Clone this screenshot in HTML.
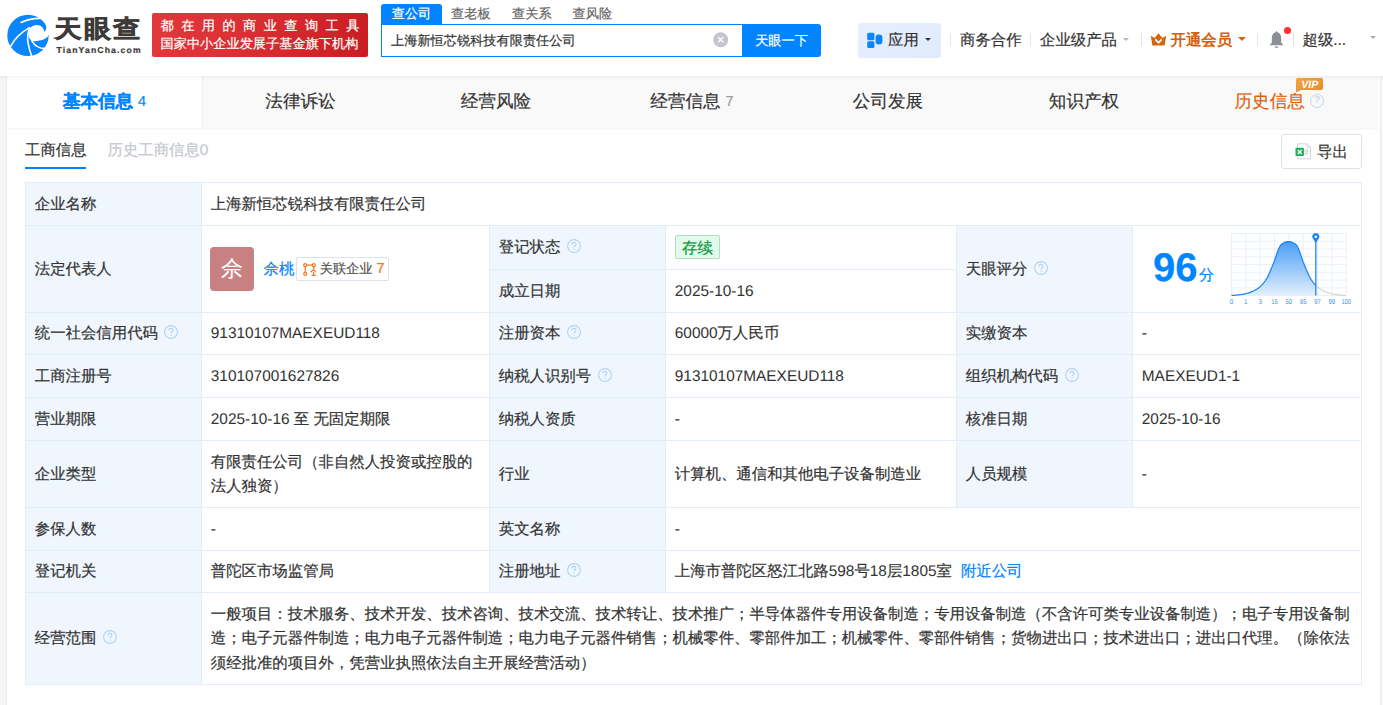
<!DOCTYPE html>
<html><head><meta charset="utf-8">
<style>
*{margin:0;padding:0;box-sizing:border-box}
html,body{width:1383px;height:705px;overflow:hidden;background:#f5f5f5;font-family:"Liberation Sans",sans-serif;color:#333;font-size:15.4px;text-spacing-trim:space-all;text-rendering:geometricPrecision;-webkit-text-stroke:0.2px currentColor}
.a{position:absolute;white-space:nowrap}
#hdr{position:absolute;left:0;top:0;width:1383px;height:76px;background:#fff;box-shadow:0 1px 4px rgba(0,0,0,.07);z-index:5}
#card{position:absolute;left:6px;top:76px;width:1375px;height:640px;background:#fff;border-left:1px solid #ececec;border-right:1px solid #ececec}
.tabs{position:absolute;left:7px;top:76px;width:1371px;height:53px;background:#f9f9f9;border-bottom:1px solid #f5f5f5;box-shadow:0 1px 0 #fbfbfb}
.tab{position:absolute;top:0;height:52px;line-height:50px;text-align:center;font-size:17.6px;color:#333;white-space:nowrap}
.cell{position:absolute;display:flex;align-items:center;padding-top:2px;padding-left:8.8px;padding-right:9px;line-height:24.2px}
.l{-webkit-text-stroke:0}
.hl{position:absolute;height:1px;background:#e3edf7}
.vl{position:absolute;width:1px;background:#e3edf7}
.q{display:block;width:14px;height:14px;margin-left:6.5px;margin-top:-5px;flex:none}
.blue{color:#0084ff}
.av{width:44px;height:44px;border-radius:4px;background:#c88080;color:#fff;font-size:22px;line-height:44px;text-align:center;flex:none}
.rel{display:inline-flex;align-items:center;height:24px;border:1px solid #dde3ec;border-radius:2px;padding:0 3px 0 6px;margin-left:1.5px;font-size:13.2px;color:#555}
.tag{display:inline-block;height:24px;line-height:25px;overflow:hidden;border:1px solid #a9e0c0;background:#e3f9ec;color:#0b9a3c;border-radius:2px;padding:0 6.3px}
</style></head><body>
<div id="hdr">
<svg class="a" style="left:4px;top:10px" width="50" height="50" viewBox="0 0 705 705">
<circle cx="338" cy="358" r="292" fill="#0a85fd"/>
<path d="M492,104 C560,140 602,200 596,254 C592,280 582,298 570,308 C567,292 560,275 548,255 C530,228 500,214 462,212 C440,210 410,222 375,245 C352,280 344,320 346,360 C350,395 365,420 395,432 C430,445 480,440 522,428 C590,410 620,380 640,335 L710,335 L710,-5 L492,-5 Z" fill="#fff"/>
<g fill="none" stroke="#fff" stroke-width="22" stroke-linecap="round">
<path d="M360,248 C250,310 150,400 95,510"/>
<path d="M362,252 C335,310 322,380 342,479 C352,540 370,600 395,665"/>
<path d="M390,432 C430,500 500,545 580,545"/>
<path d="M240,175 C320,140 420,115 510,118"/>
</g></svg>
<div class="a" style="left:54.5px;top:13px;font-size:27px;line-height:36px;font-weight:bold;color:#3d3a39;-webkit-text-stroke:0.7px #3d3a39;letter-spacing:2.4px;transform:scaleY(0.9);transform-origin:0 0">天眼查</div>
<div class="a" style="left:56.5px;top:44px;font-size:8.6px;line-height:12px;font-weight:bold;color:#3d3a39;letter-spacing:1.15px">TianYanCha.com</div>
<div class="a" style="left:152px;top:13px;width:216px;height:44px;border-radius:2px;background:linear-gradient(100deg,#e2393d 0%,#d72a2f 60%,#c81d22 100%)"></div>
<div class="a" style="left:160.5px;top:16.5px;font-size:13.2px;line-height:17px;color:#fff;letter-spacing:7.45px">都在用的商业查询工具</div>
<div class="a" style="left:160.5px;top:35px;font-size:13.2px;line-height:17px;color:#fff">国家中小企业发展子基金旗下机构</div>
<div class="a" style="left:381px;top:4px;width:61px;height:20px;background:#0084ff;border-radius:3px 3px 0 0;color:#fff;font-size:13.2px;line-height:19px;text-align:center">查公司</div>
<div class="a" style="left:451px;top:4px;font-size:13.2px;line-height:19px;color:#666">查老板</div>
<div class="a" style="left:512px;top:4px;font-size:13.2px;line-height:19px;color:#666">查关系</div>
<div class="a" style="left:572.5px;top:4px;font-size:13.2px;line-height:19px;color:#666">查风险</div>
<div class="a" style="left:381px;top:24px;width:362px;height:33px;border:1px solid #0084ff;border-right:none;background:#fff"></div>
<div class="a" style="left:391px;top:31px;font-size:13.2px;line-height:19px;color:#333">上海新恒芯锐科技有限责任公司</div>
<svg class="a" style="left:713px;top:31.5px" width="16" height="16" viewBox="0 0 16 16"><circle cx="7.7" cy="7.7" r="7.5" fill="#c4c6cc"/><path d="M5,5 L10.4,10.4 M10.4,5 L5,10.4" stroke="#fff" stroke-width="1.3"/></svg>
<div class="a" style="left:742px;top:24px;width:79px;height:33px;background:#0084ff;border-radius:0 3px 3px 0;color:#fff;font-size:13.2px;line-height:33px;text-align:center">天眼一下</div>
<div class="a" style="left:858px;top:23px;width:83px;height:35px;border-radius:3px;background:linear-gradient(160deg,#e6f0fd,#dfeafc)"></div>
<svg class="a" style="left:866px;top:32px" width="18" height="17" viewBox="0 0 18 17"><rect x="1.2" y="0.8" width="7.2" height="7.4" rx="1.5" fill="#0a85fd"/><rect x="1.2" y="9.2" width="7.2" height="6.8" rx="1.5" fill="#0a85fd"/><rect x="9.6" y="2.6" width="6.8" height="9.8" rx="3.2" fill="#0a85fd"/></svg>
<div class="a" style="left:888px;top:31px;font-size:15.4px;line-height:20px;color:#333">应用</div>
<div class="a" style="left:925px;top:37.7px;width:0;height:0;border-left:3.25px solid transparent;border-right:3.25px solid transparent;border-top:3.5px solid #333"></div><div class="a" style="left:950px;top:33px;width:1px;height:13px;background:#e3e3e3"></div>
<div class="a" style="left:960px;top:31px;font-size:15.4px;line-height:20px;color:#333">商务合作</div>
<div class="a" style="left:1030px;top:33px;width:1px;height:13px;background:#e3e3e3"></div>
<div class="a" style="left:1040px;top:31px;font-size:15.4px;line-height:20px;color:#333">企业级产品</div>
<div class="a" style="left:1122.5px;top:37.5px;width:0;height:0;border-left:3.5px solid transparent;border-right:3.5px solid transparent;border-top:3.5px solid #b4b4b4"></div><div class="a" style="left:1141px;top:33px;width:1px;height:13px;background:#e3e3e3"></div>
<svg class="a" style="left:1150px;top:33px" width="17" height="13" viewBox="0 0 17 13"><path d="M0.8,2.8 L4.6,5 L8.5,0.2 L12.4,5 L16.2,2.8 L14.6,12.6 L2.4,12.6 Z" fill="#d9620c"/><path d="M5.3,6.4 L8.5,9.8 L11.7,6.4" fill="none" stroke="#fff" stroke-width="1.8"/></svg>
<div class="a" style="left:1170.5px;top:31px;font-size:15.4px;line-height:20px;color:#d6600c;font-weight:bold;-webkit-text-stroke:0">开通会员</div>
<div class="a" style="left:1237.5px;top:37px;width:0;height:0;border-left:4.0px solid transparent;border-right:4.0px solid transparent;border-top:4px solid #d9620c"></div><div class="a" style="left:1257px;top:33px;width:1px;height:13px;background:#e3e3e3"></div>
<svg class="a" style="left:1268px;top:30px" width="17" height="19" viewBox="0 0 17 19"><path d="M8.5,1 C8.9,1 9.1,1.4 9.1,1.9 C12,2.6 13.2,5.3 13.2,8.5 L13.2,12.8 L15.2,14.8 L15.2,15.2 L1.8,15.2 L1.8,14.8 L3.8,12.8 L3.8,8.5 C3.8,5.3 5,2.6 7.9,1.9 C7.9,1.4 8.1,1 8.5,1 Z" fill="#8c8f95"/><rect x="6.6" y="16.5" width="3.8" height="1.2" rx="0.6" fill="#8c8f95"/></svg>
<div class="a" style="left:1284px;top:27px;width:7px;height:7px;border-radius:50%;background:#ff3131"></div>
<div class="a" style="left:1293px;top:33px;width:1px;height:13px;background:#e3e3e3"></div>
<div class="a" style="left:1302.5px;top:31px;font-size:15.4px;line-height:20px;color:#333">超级...</div>
<div class="a" style="left:1369.5px;top:36.3px;width:0;height:0;border-left:3.75px solid transparent;border-right:3.75px solid transparent;border-top:3.8px solid #aaa"></div>
</div>
<div id="card"></div>
<div class="tabs">
  <div class="tab" style="left:0;width:195px;background:#fff;color:#0084ff;font-weight:bold">基本信息 <span style="font-size:14.5px;font-weight:normal;position:relative;top:-1px">4</span></div>
  <div class="tab" style="left:195px;width:196px;border-left:1px solid #efefef">法律诉讼</div>
  <div class="tab" style="left:391px;width:196px">经营风险</div>
  <div class="tab" style="left:587px;width:196px">经营信息 <span style="font-size:14.5px;color:#999;position:relative;top:-1.5px">7</span></div>
  <div class="tab" style="left:783px;width:196px">公司发展</div>
  <div class="tab" style="left:979px;width:196px">知识产权</div>
  <div class="tab" style="left:1227.5px;width:80px;color:#de620c;text-align:left">历史信息</div>
</div>

<div class="a" style="left:25px;top:141px;font-size:15.4px;line-height:20px;color:#333">工商信息</div>
<div class="a" style="left:25px;top:167px;width:61px;height:2px;background:#0084ff"></div>
<div class="a" style="left:107.5px;top:141px;font-size:15.4px;line-height:20px;color:#c4c7ce">历史工商信息0</div>
<div class="a" style="left:1281px;top:134px;width:81px;height:35px;border:1px solid #dde2ea;border-radius:3px;background:#fff"></div>
<svg class="a" style="left:1295px;top:143px" width="17" height="17" viewBox="0 0 17 17"><path d="M2.5,0.8 L12,0.8 L15.5,4.3 L15.5,15.8 L2.5,15.8 Z" fill="#fff" stroke="#d3d6dc" stroke-width="1"/><path d="M12,0.8 L12,4.3 L15.5,4.3" fill="none" stroke="#d3d6dc" stroke-width="1"/><rect x="9.5" y="6.4" width="3.5" height="1" fill="#c6c9cf"/><rect x="9.5" y="8.4" width="3.5" height="1" fill="#c6c9cf"/><rect x="9.5" y="10.4" width="3.5" height="1" fill="#c6c9cf"/><rect x="0.5" y="4.8" width="8.4" height="8.2" rx="0.8" fill="#1fae5c"/><path d="M2.7,7 L6.7,11 M6.7,7 L2.7,11" stroke="#fff" stroke-width="1.3"/></svg>
<div class="a" style="left:1317px;top:142.5px;font-size:15.4px;line-height:20px;color:#333">导出</div>
<div class="a" style="left:1310px;top:94px;width:14px;height:14px;border:1px solid #c3d6e8;border-radius:50%;color:#c3d6e8;font-size:10px;line-height:12px;text-align:center;z-index:3">?</div>
<svg class="a" style="left:1295px;top:77px;z-index:3" width="29" height="16" viewBox="0 0 29 16"><defs><linearGradient id="vg" x1="0" y1="0" x2="1" y2="1"><stop offset="0" stop-color="#f2a548"/><stop offset="1" stop-color="#e78a22"/></linearGradient></defs><path d="M2.5,1 L26,1 Q28,1 28,3 L28,11 Q28,13 26,13 L6,13 L1,15.5 L1,3 Q1,1 2.5,1 Z" fill="url(#vg)"/><text x="14.8" y="11" font-family="Liberation Sans" font-size="10.5" font-weight="bold" font-style="italic" fill="#fff" text-anchor="middle">VIP</text></svg>

<div id="tbl"><div class="cell" style="left:26px;top:183px;width:175px;height:42px;background:#eff6fd;">企业名称</div>
<div class="cell" style="left:202px;top:183px;width:1159px;height:42px;">上海新恒芯锐科技有限责任公司</div>
<div class="cell" style="left:26px;top:226px;width:175px;height:86px;background:#eff6fd;">法定代表人</div>
<div class="cell" style="left:202px;top:226px;width:287px;height:86px;"><div class="av" style="margin-left:-0.8px;margin-top:-2px">佘</div><span class="blue" style="margin-left:9.5px">佘桃</span><span class="rel" style="margin-top:-2px"><svg width="13" height="13" viewBox="0 0 13 13" style="margin-right:4px;flex:none"><g fill="none" stroke="#f5731c" stroke-width="1.2"><circle cx="2.2" cy="2.2" r="1.5"/><circle cx="10.8" cy="2.2" r="1.5"/><circle cx="2.2" cy="10.8" r="1.5"/><path d="M3.7,2.2H9.3M2.2,3.7V9.3M10.8,3.7V6.2M7.6,9.2L10.5,6.6L13,9.2M8.6,12.3H12.6M10.6,9V12.3"/></g></svg>关联企业<span style="color:#f5731c;margin-left:4px;font-size:14.5px">7</span></span></div>
<div class="cell" style="left:490px;top:226px;width:175px;height:43px;background:#eff6fd;">登记状态<svg class="q" viewBox="0 0 14 14"><circle cx="7" cy="7" r="6.4" fill="none" stroke="#b3d3f1" stroke-width="1.1"/><path d="M5,5.4 C5,4.1 5.9,3.4 7,3.4 C8.1,3.4 9,4.1 9,5.2 C9,6.5 7.2,6.6 7.2,8.2" fill="none" stroke="#b3d3f1" stroke-width="1.1"/><circle cx="7.2" cy="10.1" r="0.7" fill="#b3d3f1"/></svg></div>
<div class="cell" style="left:666px;top:226px;width:290px;height:43px;"><span class="tag" style="margin-top:-3px">存续</span></div>
<div class="cell" style="left:490px;top:270px;width:175px;height:42px;background:#eff6fd;">成立日期</div>
<div class="cell" style="left:666px;top:270px;width:290px;height:42px;"><div><span class="l">2025-10-16</span></div></div>
<div class="cell" style="left:957px;top:226px;width:175px;height:86px;background:#eff6fd;">天眼评分<svg class="q" viewBox="0 0 14 14"><circle cx="7" cy="7" r="6.4" fill="none" stroke="#b3d3f1" stroke-width="1.1"/><path d="M5,5.4 C5,4.1 5.9,3.4 7,3.4 C8.1,3.4 9,4.1 9,5.2 C9,6.5 7.2,6.6 7.2,8.2" fill="none" stroke="#b3d3f1" stroke-width="1.1"/><circle cx="7.2" cy="10.1" r="0.7" fill="#b3d3f1"/></svg></div>
<div class="cell" style="left:1133px;top:226px;width:228px;height:86px;"></div>
<svg class="a" style="left:1226px;top:226px" width="130" height="82" viewBox="1226 226 130 82"><defs><linearGradient id="cg" x1="0" y1="0" x2="0" y2="1"><stop offset="0" stop-color="#4a9df6"/><stop offset="1" stop-color="#e3f0fd"/></linearGradient></defs><path d="M1231.50,233.50V295.50M1245.84,233.50V295.50M1260.17,233.50V295.50M1274.51,233.50V295.50M1288.85,233.50V295.50M1303.19,233.50V295.50M1317.53,233.50V295.50M1331.86,233.50V295.50M1346.20,233.50V295.50M1231.50,233.50H1346.20M1231.50,241.25H1346.20M1231.50,249.00H1346.20M1231.50,256.75H1346.20M1231.50,264.50H1346.20M1231.50,272.25H1346.20M1231.50,280.00H1346.20M1231.50,287.75H1346.20M1231.50,295.50H1346.20" stroke="#e8f0f9" stroke-width="1" fill="none"/><path d="M1231.50,295.50 L1231.50,295.46 L1232.00,295.43 L1232.50,295.40 L1233.00,295.37 L1233.50,295.34 L1234.00,295.30 L1234.50,295.26 L1235.00,295.22 L1235.50,295.18 L1236.00,295.13 L1236.50,295.08 L1237.00,295.03 L1237.50,294.98 L1238.00,294.92 L1238.50,294.86 L1239.00,294.80 L1239.50,294.74 L1240.00,294.68 L1240.50,294.62 L1241.00,294.55 L1241.50,294.48 L1242.00,294.41 L1242.50,294.34 L1243.00,294.26 L1243.50,294.17 L1244.00,294.08 L1244.50,293.98 L1245.00,293.88 L1245.50,293.76 L1246.00,293.64 L1246.50,293.51 L1247.00,293.37 L1247.50,293.23 L1248.00,293.09 L1248.50,292.94 L1249.00,292.79 L1249.50,292.63 L1250.00,292.46 L1250.50,292.28 L1251.00,292.09 L1251.50,291.89 L1252.00,291.68 L1252.50,291.46 L1253.00,291.22 L1253.50,290.97 L1254.00,290.71 L1254.50,290.44 L1255.00,290.17 L1255.50,289.88 L1256.00,289.59 L1256.50,289.29 L1257.00,288.97 L1257.50,288.65 L1258.00,288.30 L1258.50,287.95 L1259.00,287.57 L1259.50,287.18 L1260.00,286.77 L1260.50,286.34 L1261.00,285.89 L1261.50,285.36 L1262.00,284.81 L1262.50,284.25 L1263.00,283.66 L1263.50,283.06 L1264.00,282.43 L1264.50,281.77 L1265.00,281.09 L1265.50,280.37 L1266.00,279.61 L1266.50,278.82 L1267.00,277.98 L1267.50,277.09 L1268.00,276.14 L1268.50,275.13 L1269.00,274.06 L1269.50,272.94 L1270.00,271.78 L1270.50,270.58 L1271.00,269.36 L1271.50,268.13 L1272.00,266.89 L1272.50,265.65 L1273.00,264.42 L1273.50,263.22 L1274.00,262.04 L1274.50,260.70 L1275.00,259.25 L1275.50,257.76 L1276.00,256.26 L1276.50,254.76 L1277.00,253.28 L1277.50,251.86 L1278.00,250.52 L1278.50,249.27 L1279.00,248.15 L1279.50,247.17 L1280.00,246.21 L1280.50,245.42 L1281.00,244.80 L1281.50,244.31 L1282.00,243.93 L1282.50,243.63 L1283.00,243.36 L1283.50,243.11 L1284.00,242.84 L1284.50,242.56 L1285.00,242.32 L1285.50,242.11 L1286.00,241.95 L1286.50,241.82 L1287.00,241.72 L1287.50,241.66 L1288.00,241.62 L1288.50,241.60 L1289.00,241.61 L1289.50,241.64 L1290.00,241.69 L1290.50,241.78 L1291.00,241.89 L1291.50,242.04 L1292.00,242.23 L1292.50,242.46 L1293.00,242.73 L1293.50,243.01 L1294.00,243.26 L1294.50,243.52 L1295.00,243.80 L1295.50,244.15 L1296.00,244.59 L1296.50,245.15 L1297.00,245.87 L1297.50,246.78 L1298.00,247.74 L1298.50,248.80 L1299.00,250.01 L1299.50,251.31 L1300.00,252.71 L1300.50,254.16 L1301.00,255.65 L1301.50,257.16 L1302.00,258.66 L1302.50,260.13 L1303.00,261.54 L1303.50,262.74 L1304.00,263.94 L1304.50,265.16 L1305.00,266.39 L1305.50,267.63 L1306.00,268.87 L1306.50,270.10 L1307.00,271.30 L1307.50,272.48 L1308.00,273.62 L1308.50,274.71 L1309.00,275.75 L1309.50,276.72 L1310.00,277.63 L1310.50,278.49 L1311.00,279.30 L1311.50,280.07 L1312.00,280.81 L1312.50,281.50 L1313.00,282.17 L1313.50,282.81 L1314.00,283.42 L1314.50,284.01 L1315.00,284.59 L1315.50,285.14 L1315.80,285.47 L1315.80,295.50 Z" fill="url(#cg)"/><path d="M1231.50,295.46 L1232.00,295.43 L1232.50,295.40 L1233.00,295.37 L1233.50,295.34 L1234.00,295.30 L1234.50,295.26 L1235.00,295.22 L1235.50,295.18 L1236.00,295.13 L1236.50,295.08 L1237.00,295.03 L1237.50,294.98 L1238.00,294.92 L1238.50,294.86 L1239.00,294.80 L1239.50,294.74 L1240.00,294.68 L1240.50,294.62 L1241.00,294.55 L1241.50,294.48 L1242.00,294.41 L1242.50,294.34 L1243.00,294.26 L1243.50,294.17 L1244.00,294.08 L1244.50,293.98 L1245.00,293.88 L1245.50,293.76 L1246.00,293.64 L1246.50,293.51 L1247.00,293.37 L1247.50,293.23 L1248.00,293.09 L1248.50,292.94 L1249.00,292.79 L1249.50,292.63 L1250.00,292.46 L1250.50,292.28 L1251.00,292.09 L1251.50,291.89 L1252.00,291.68 L1252.50,291.46 L1253.00,291.22 L1253.50,290.97 L1254.00,290.71 L1254.50,290.44 L1255.00,290.17 L1255.50,289.88 L1256.00,289.59 L1256.50,289.29 L1257.00,288.97 L1257.50,288.65 L1258.00,288.30 L1258.50,287.95 L1259.00,287.57 L1259.50,287.18 L1260.00,286.77 L1260.50,286.34 L1261.00,285.89 L1261.50,285.36 L1262.00,284.81 L1262.50,284.25 L1263.00,283.66 L1263.50,283.06 L1264.00,282.43 L1264.50,281.77 L1265.00,281.09 L1265.50,280.37 L1266.00,279.61 L1266.50,278.82 L1267.00,277.98 L1267.50,277.09 L1268.00,276.14 L1268.50,275.13 L1269.00,274.06 L1269.50,272.94 L1270.00,271.78 L1270.50,270.58 L1271.00,269.36 L1271.50,268.13 L1272.00,266.89 L1272.50,265.65 L1273.00,264.42 L1273.50,263.22 L1274.00,262.04 L1274.50,260.70 L1275.00,259.25 L1275.50,257.76 L1276.00,256.26 L1276.50,254.76 L1277.00,253.28 L1277.50,251.86 L1278.00,250.52 L1278.50,249.27 L1279.00,248.15 L1279.50,247.17 L1280.00,246.21 L1280.50,245.42 L1281.00,244.80 L1281.50,244.31 L1282.00,243.93 L1282.50,243.63 L1283.00,243.36 L1283.50,243.11 L1284.00,242.84 L1284.50,242.56 L1285.00,242.32 L1285.50,242.11 L1286.00,241.95 L1286.50,241.82 L1287.00,241.72 L1287.50,241.66 L1288.00,241.62 L1288.50,241.60 L1289.00,241.61 L1289.50,241.64 L1290.00,241.69 L1290.50,241.78 L1291.00,241.89 L1291.50,242.04 L1292.00,242.23 L1292.50,242.46 L1293.00,242.73 L1293.50,243.01 L1294.00,243.26 L1294.50,243.52 L1295.00,243.80 L1295.50,244.15 L1296.00,244.59 L1296.50,245.15 L1297.00,245.87 L1297.50,246.78 L1298.00,247.74 L1298.50,248.80 L1299.00,250.01 L1299.50,251.31 L1300.00,252.71 L1300.50,254.16 L1301.00,255.65 L1301.50,257.16 L1302.00,258.66 L1302.50,260.13 L1303.00,261.54 L1303.50,262.74 L1304.00,263.94 L1304.50,265.16 L1305.00,266.39 L1305.50,267.63 L1306.00,268.87 L1306.50,270.10 L1307.00,271.30 L1307.50,272.48 L1308.00,273.62 L1308.50,274.71 L1309.00,275.75 L1309.50,276.72 L1310.00,277.63 L1310.50,278.49 L1311.00,279.30 L1311.50,280.07 L1312.00,280.81 L1312.50,281.50 L1313.00,282.17 L1313.50,282.81 L1314.00,283.42 L1314.50,284.01 L1315.00,284.59 L1315.50,285.14 L1315.80,285.47" fill="none" stroke="#1a85f6" stroke-width="1.25"/><path d="M1315.80,285.47 L1316.30,285.98 L1316.80,286.43 L1317.30,286.86 L1317.80,287.26 L1318.30,287.65 L1318.80,288.02 L1319.30,288.37 L1319.80,288.71 L1320.30,289.04 L1320.80,289.35 L1321.30,289.65 L1321.80,289.94 L1322.30,290.22 L1322.80,290.49 L1323.30,290.76 L1323.80,291.02 L1324.30,291.27 L1324.80,291.50 L1325.30,291.72 L1325.80,291.93 L1326.30,292.13 L1326.80,292.31 L1327.30,292.49 L1327.80,292.66 L1328.30,292.82 L1328.80,292.97 L1329.30,293.12 L1329.80,293.26 L1330.30,293.40 L1330.80,293.53 L1331.30,293.67 L1331.80,293.79 L1332.30,293.90 L1332.80,294.00 L1333.30,294.10 L1333.80,294.19 L1334.30,294.28 L1334.80,294.35 L1335.30,294.43 L1335.80,294.50 L1336.30,294.56 L1336.80,294.63 L1337.30,294.69 L1337.80,294.75 L1338.30,294.82 L1338.80,294.88 L1339.30,294.93 L1339.80,294.99 L1340.30,295.04 L1340.80,295.09 L1341.30,295.14 L1341.80,295.19 L1342.30,295.23 L1342.80,295.27 L1343.30,295.31 L1343.80,295.35 L1344.30,295.38 L1344.80,295.41 L1345.30,295.44 L1345.80,295.46" fill="none" stroke="#cdd6e0" stroke-width="1.2"/><path d="M1315.80,240 V295.50" stroke="#1a85f6" stroke-width="1.3"/><path d="M1315.80,243 L1312.90,238.6 A3.5,3.5 0 1 1 1318.70,238.6 Z" fill="#1a85f6"/><circle cx="1315.80" cy="236.8" r="1.3" fill="#fff"/><text x="1231.50" y="304" font-family="Liberation Sans" font-size="7" fill="#3b8fe3" text-anchor="middle" textLength="3.5" lengthAdjust="spacingAndGlyphs">0</text><text x="1245.84" y="304" font-family="Liberation Sans" font-size="7" fill="#3b8fe3" text-anchor="middle" textLength="3.5" lengthAdjust="spacingAndGlyphs">1</text><text x="1260.17" y="304" font-family="Liberation Sans" font-size="7" fill="#3b8fe3" text-anchor="middle" textLength="3.5" lengthAdjust="spacingAndGlyphs">3</text><text x="1274.51" y="304" font-family="Liberation Sans" font-size="7" fill="#3b8fe3" text-anchor="middle" textLength="6.5" lengthAdjust="spacingAndGlyphs">15</text><text x="1288.85" y="304" font-family="Liberation Sans" font-size="7" fill="#3b8fe3" text-anchor="middle" textLength="6.5" lengthAdjust="spacingAndGlyphs">50</text><text x="1303.19" y="304" font-family="Liberation Sans" font-size="7" fill="#3b8fe3" text-anchor="middle" textLength="6.5" lengthAdjust="spacingAndGlyphs">85</text><text x="1317.53" y="304" font-family="Liberation Sans" font-size="7" fill="#3b8fe3" text-anchor="middle" textLength="6.5" lengthAdjust="spacingAndGlyphs">97</text><text x="1331.86" y="304" font-family="Liberation Sans" font-size="7" fill="#3b8fe3" text-anchor="middle" textLength="6.5" lengthAdjust="spacingAndGlyphs">99</text><text x="1346.20" y="304" font-family="Liberation Sans" font-size="7" fill="#3b8fe3" text-anchor="middle" textLength="9.5" lengthAdjust="spacingAndGlyphs">100</text></svg><div class="a" style="left:1153px;top:245px;font-size:40px;line-height:46px;font-weight:bold;color:#0084ff">96</div><div class="a" style="left:1199px;top:266px;font-size:15px;line-height:20px;color:#0084ff">分</div>
<div class="cell" style="left:26px;top:313px;width:175px;height:41px;background:#eff6fd;">统一社会信用代码<svg class="q" viewBox="0 0 14 14"><circle cx="7" cy="7" r="6.4" fill="none" stroke="#b3d3f1" stroke-width="1.1"/><path d="M5,5.4 C5,4.1 5.9,3.4 7,3.4 C8.1,3.4 9,4.1 9,5.2 C9,6.5 7.2,6.6 7.2,8.2" fill="none" stroke="#b3d3f1" stroke-width="1.1"/><circle cx="7.2" cy="10.1" r="0.7" fill="#b3d3f1"/></svg></div>
<div class="cell" style="left:202px;top:313px;width:287px;height:41px;"><div><span class="l">91310107MAEXEUD118</span></div></div>
<div class="cell" style="left:490px;top:313px;width:175px;height:41px;background:#eff6fd;">注册资本<svg class="q" viewBox="0 0 14 14"><circle cx="7" cy="7" r="6.4" fill="none" stroke="#b3d3f1" stroke-width="1.1"/><path d="M5,5.4 C5,4.1 5.9,3.4 7,3.4 C8.1,3.4 9,4.1 9,5.2 C9,6.5 7.2,6.6 7.2,8.2" fill="none" stroke="#b3d3f1" stroke-width="1.1"/><circle cx="7.2" cy="10.1" r="0.7" fill="#b3d3f1"/></svg></div>
<div class="cell" style="left:666px;top:313px;width:290px;height:41px;"><div><span class="l">60000</span>万人民币</div></div>
<div class="cell" style="left:957px;top:313px;width:175px;height:41px;background:#eff6fd;">实缴资本</div>
<div class="cell" style="left:1133px;top:313px;width:228px;height:41px;">-</div>
<div class="cell" style="left:26px;top:355px;width:175px;height:42px;background:#eff6fd;">工商注册号</div>
<div class="cell" style="left:202px;top:355px;width:287px;height:42px;"><div><span class="l">310107001627826</span></div></div>
<div class="cell" style="left:490px;top:355px;width:175px;height:42px;background:#eff6fd;">纳税人识别号<svg class="q" viewBox="0 0 14 14"><circle cx="7" cy="7" r="6.4" fill="none" stroke="#b3d3f1" stroke-width="1.1"/><path d="M5,5.4 C5,4.1 5.9,3.4 7,3.4 C8.1,3.4 9,4.1 9,5.2 C9,6.5 7.2,6.6 7.2,8.2" fill="none" stroke="#b3d3f1" stroke-width="1.1"/><circle cx="7.2" cy="10.1" r="0.7" fill="#b3d3f1"/></svg></div>
<div class="cell" style="left:666px;top:355px;width:290px;height:42px;"><div><span class="l">91310107MAEXEUD118</span></div></div>
<div class="cell" style="left:957px;top:355px;width:175px;height:42px;background:#eff6fd;">组织机构代码<svg class="q" viewBox="0 0 14 14"><circle cx="7" cy="7" r="6.4" fill="none" stroke="#b3d3f1" stroke-width="1.1"/><path d="M5,5.4 C5,4.1 5.9,3.4 7,3.4 C8.1,3.4 9,4.1 9,5.2 C9,6.5 7.2,6.6 7.2,8.2" fill="none" stroke="#b3d3f1" stroke-width="1.1"/><circle cx="7.2" cy="10.1" r="0.7" fill="#b3d3f1"/></svg></div>
<div class="cell" style="left:1133px;top:355px;width:228px;height:42px;"><div><span class="l">MAEXEUD1-1</span></div></div>
<div class="cell" style="left:26px;top:398px;width:175px;height:42px;background:#eff6fd;">营业期限</div>
<div class="cell" style="left:202px;top:398px;width:287px;height:42px;"><div><span class="l">2025-10-16</span> 至 无固定期限</div></div>
<div class="cell" style="left:490px;top:398px;width:175px;height:42px;background:#eff6fd;">纳税人资质</div>
<div class="cell" style="left:666px;top:398px;width:290px;height:42px;">-</div>
<div class="cell" style="left:957px;top:398px;width:175px;height:42px;background:#eff6fd;">核准日期</div>
<div class="cell" style="left:1133px;top:398px;width:228px;height:42px;"><div><span class="l">2025-10-16</span></div></div>
<div class="cell" style="left:26px;top:441px;width:175px;height:66px;background:#eff6fd;">企业类型</div>
<div class="cell" style="left:202px;top:441px;width:287px;height:66px;">有限责任公司（非自然人投资或控股的法人独资）</div>
<div class="cell" style="left:490px;top:441px;width:175px;height:66px;background:#eff6fd;">行业</div>
<div class="cell" style="left:666px;top:441px;width:290px;height:66px;">计算机、通信和其他电子设备制造业</div>
<div class="cell" style="left:957px;top:441px;width:175px;height:66px;background:#eff6fd;">人员规模</div>
<div class="cell" style="left:1133px;top:441px;width:228px;height:66px;">-</div>
<div class="cell" style="left:26px;top:508px;width:175px;height:42px;background:#eff6fd;">参保人数</div>
<div class="cell" style="left:202px;top:508px;width:287px;height:42px;">-</div>
<div class="cell" style="left:490px;top:508px;width:175px;height:42px;background:#eff6fd;">英文名称</div>
<div class="cell" style="left:666px;top:508px;width:695px;height:42px;">-</div>
<div class="cell" style="left:26px;top:551px;width:175px;height:41px;background:#eff6fd;">登记机关</div>
<div class="cell" style="left:202px;top:551px;width:287px;height:41px;">普陀区市场监管局</div>
<div class="cell" style="left:490px;top:551px;width:175px;height:41px;background:#eff6fd;">注册地址<svg class="q" viewBox="0 0 14 14"><circle cx="7" cy="7" r="6.4" fill="none" stroke="#b3d3f1" stroke-width="1.1"/><path d="M5,5.4 C5,4.1 5.9,3.4 7,3.4 C8.1,3.4 9,4.1 9,5.2 C9,6.5 7.2,6.6 7.2,8.2" fill="none" stroke="#b3d3f1" stroke-width="1.1"/><circle cx="7.2" cy="10.1" r="0.7" fill="#b3d3f1"/></svg></div>
<div class="cell" style="left:666px;top:551px;width:695px;height:41px;"><div>上海市普陀区怒江北路<span class="l">598</span>号<span class="l">18</span>层<span class="l">1805</span>室<span class="blue" style="margin-left:9px">附近公司</span></div></div>
<div class="cell" style="left:26px;top:593px;width:175px;height:91px;background:#eff6fd;">经营范围<svg class="q" viewBox="0 0 14 14"><circle cx="7" cy="7" r="6.4" fill="none" stroke="#b3d3f1" stroke-width="1.1"/><path d="M5,5.4 C5,4.1 5.9,3.4 7,3.4 C8.1,3.4 9,4.1 9,5.2 C9,6.5 7.2,6.6 7.2,8.2" fill="none" stroke="#b3d3f1" stroke-width="1.1"/><circle cx="7.2" cy="10.1" r="0.7" fill="#b3d3f1"/></svg></div>
<div class="cell" style="left:202px;top:593px;width:1159px;height:91px;"><div>一般项目：技术服务、技术开发、技术咨询、技术交流、技术转让、技术推广；半导体器件专用设备制造；专用设备制造（不含许可类专业设备制造）；电子专用设备制造；电子元器件制造；电力电子元器件制造；电力电子元器件销售；机械零件、零部件加工；机械零件、零部件销售；货物进出口；技术进出口；进出口代理。（除依法须经批准的项目外，凭营业执照依法自主开展经营活动）</div></div>
<div class="hl" style="left:25px;top:182px;width:1337px"></div>
<div class="hl" style="left:25px;top:225px;width:1337px"></div>
<div class="hl" style="left:25px;top:312px;width:1337px"></div>
<div class="hl" style="left:25px;top:354px;width:1337px"></div>
<div class="hl" style="left:25px;top:397px;width:1337px"></div>
<div class="hl" style="left:25px;top:440px;width:1337px"></div>
<div class="hl" style="left:25px;top:507px;width:1337px"></div>
<div class="hl" style="left:25px;top:550px;width:1337px"></div>
<div class="hl" style="left:25px;top:592px;width:1337px"></div>
<div class="hl" style="left:25px;top:684px;width:1337px"></div>
<div class="hl" style="left:489px;top:269px;width:467px"></div>
<div class="vl" style="left:25px;top:182px;height:503px"></div>
<div class="vl" style="left:1361px;top:182px;height:503px"></div>
<div class="vl" style="left:201px;top:182px;height:503px"></div>
<div class="vl" style="left:489px;top:225px;height:368px"></div>
<div class="vl" style="left:665px;top:225px;height:368px"></div>
<div class="vl" style="left:956px;top:225px;height:283px"></div>
<div class="vl" style="left:1132px;top:225px;height:283px"></div></div>
</body></html>
